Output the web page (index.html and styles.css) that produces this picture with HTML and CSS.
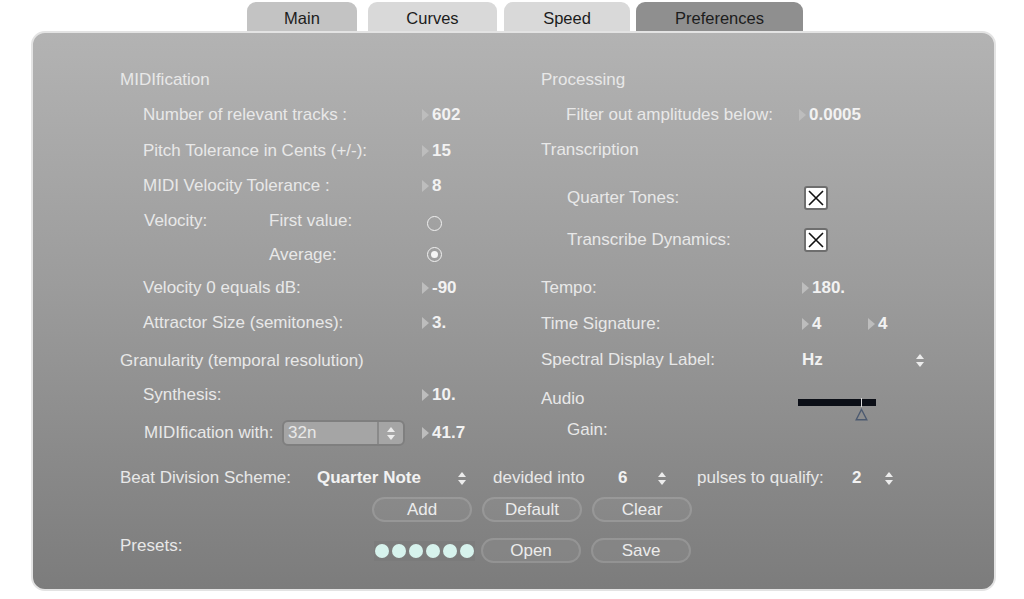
FILE: index.html
```html
<!DOCTYPE html>
<html>
<head>
<meta charset="utf-8">
<link rel="stylesheet" href="styles.css">
</head>
<body>
<div class="tabs">
  <div class="tab tab-main">Main</div>
  <div class="tab tab-light tab-curves">Curves</div>
  <div class="tab tab-light tab-speed">Speed</div>
  <div class="tab tab-active tab-prefs">Preferences</div>
</div>
<div class="panel">
  <div class="cols">
    <div class="col-left">
      <div class="row h35 head">MIDIfication</div>
      <div class="row h36"><span class="lbl-l">Number of relevant tracks :</span><span class="val"><i class="tri"></i>602</span></div>
      <div class="row h35"><span class="lbl-l">Pitch Tolerance in Cents (+/-):</span><span class="val"><i class="tri"></i>15</span></div>
      <div class="row h35"><span class="lbl-l">MIDI Velocity Tolerance :</span><span class="val"><i class="tri"></i>8</span></div>
      <div class="row h35"><span class="lbl-v">Velocity:</span><span class="lbl-sub">First value:</span><span class="radio"></span></div>
      <div class="row h33"><span class="lbl-v"></span><span class="lbl-sub">Average:</span><span class="radio on"></span></div>
      <div class="row h34"><span class="lbl-l">Velocity 0 equals dB:</span><span class="val"><i class="tri"></i>-90</span></div>
      <div class="row h35"><span class="lbl-l">Attractor Size (semitones):</span><span class="val"><i class="tri"></i>3.</span></div>
      <div class="row h38 pt3 head">Granularity (temporal resolution)</div>
      <div class="row h34"><span class="lbl-l">Synthesis:</span><span class="val"><i class="tri"></i>10.</span></div>
      <div class="row h42"><span class="lbl-w">MIDIfication with:</span>
        <span class="select"><span class="select-text">32n</span><span class="select-arrows"><i class="up"></i><i class="down"></i></span></span>
        <span class="val val-after"><i class="tri"></i>41.7</span></div>
    </div>
    <div class="col-right">
      <div class="row h35 head">Processing</div>
      <div class="row h35"><span class="lbl-r">Filter out amplitudes below:</span><span class="val"><i class="tri"></i>0.0005</span></div>
      <div class="row h36 head">Transcription</div>
      <div class="row h40 mt10"><span class="lbl-r2">Quarter Tones:</span><span class="check"><svg width="18" height="18" viewBox="0 0 18 18"><path d="M2 2L16 16M16 2L2 16" stroke="#111" stroke-width="1.6"/></svg></span></div>
      <div class="row h40 mt2"><span class="lbl-r2">Transcribe Dynamics:</span><span class="check"><svg width="18" height="18" viewBox="0 0 18 18"><path d="M2 2L16 16M16 2L2 16" stroke="#111" stroke-width="1.6"/></svg></span></div>
      <div class="row h36 mt10"><span class="lbl-h">Tempo:</span><span class="val"><i class="tri"></i>180.</span></div>
      <div class="row h36"><span class="lbl-h">Time Signature:</span><span class="val ts"><i class="tri"></i>4</span><span class="val"><i class="tri"></i>4</span></div>
      <div class="row h36"><span class="lbl-h">Spectral Display Label:</span><span class="bold hz">Hz</span><span class="arrows"><i class="up"></i><i class="down"></i></span></div>
      <div class="row h42"><span class="lbl-h">Audio</span>
        <span class="slider"><span class="bar"><span class="knob"></span></span><svg class="thumb" width="13" height="13" viewBox="0 0 13 13"><path d="M6.5 1.5L11.8 11.8H1.2Z" fill="none" stroke="#4c5a70" stroke-width="1.4"/></svg></span>
      </div>
      <div class="row h20"><span class="lbl-r2">Gain:</span></div>
    </div>
  </div>
  <div class="beat">
    <span class="b-lbl">Beat Division Scheme:</span>
    <span class="bold b-val">Quarter Note</span>
    <span class="arrows b-arr1"><i class="up"></i><i class="down"></i></span>
    <span class="b-dev">devided into</span>
    <span class="bold b-six">6</span>
    <span class="arrows b-arr2"><i class="up"></i><i class="down"></i></span>
    <span class="b-pul">pulses to qualify:</span>
    <span class="bold b-two">2</span>
    <span class="arrows"><i class="up"></i><i class="down"></i></span>
  </div>
  <div class="btnrow btnrow1">
    <span class="btn">Add</span>
    <span class="btn">Default</span>
    <span class="btn">Clear</span>
  </div>
  <div class="btnrow btnrow2">
    <span class="presets">Presets:</span>
    <span class="dots"><i></i><i></i><i></i><i></i><i></i><i></i></span>
    <span class="btn">Open</span>
    <span class="btn">Save</span>
  </div>
</div>
</body>
</html>
```
FILE: styles.css
```css
* { box-sizing: border-box; }
html, body { margin: 0; padding: 0; background: #ffffff; }
body {
  font-family: "Liberation Sans", Arial, sans-serif;
  font-size: 17px;
  width: 1024px;
  height: 599px;
  overflow: hidden;
}
.tabs {
  display: flex;
  height: 31px;
  padding-top: 2px;
  padding-left: 247px;
}
.tab {
  height: 29px;
  border-radius: 9px 9px 0 0;
  background: #c3c3c3;
  color: #1c1c1c;
  font-size: 16.5px;
  display: flex;
  align-items: center;
  justify-content: center;
  padding-top: 3px;
}
.tab-light { background: #d9d9d9; }
.tab-active { background: #8f8f8f; }
.tab-main { width: 110px; margin-right: 11px; }
.tab-curves { width: 129px; margin-right: 7px; }
.tab-speed { width: 126px; margin-right: 6px; }
.tab-prefs { width: 167px; }

.panel {
  margin-left: 31px;
  width: 965px;
  height: 560px;
  border: 2px solid #e3e3e3;
  border-radius: 14px;
  background: linear-gradient(180deg, #b3b3b3 0%, #9c9c9c 45%, #7c7c7c 100%);
  padding: 29px 0 0 87px;
  color: #e8e8e8;
}
.cols {
  display: grid;
  grid-template-columns: 421px 1fr;
}
.row {
  display: flex;
  align-items: center;
  white-space: nowrap;
}
.h20 { height: 20px; }
.h33 { height: 33px; }
.h34 { height: 34px; }
.h35 { height: 35px; }
.h36 { height: 36px; }
.h38 { height: 38px; }
.h40 { height: 40px; }
.h42 { height: 42px; }
.pt3 { padding-top: 3px; }
.mt10 { margin-top: 10px; }
.mt2 { margin-top: 2px; }

.lbl-l { margin-left: 23px; width: 279px; }
.lbl-v { margin-left: 24px; width: 125px; }
.lbl-sub { width: 161px; }
.lbl-w { margin-left: 24px; width: 138px; }
.lbl-r { margin-left: 25px; width: 233px; }
.lbl-r2 { margin-left: 26px; width: 237px; }
.lbl-h { width: 261px; }

.val {
  display: inline-flex;
  align-items: center;
  font-weight: bold;
  color: #f2f2f2;
}
.tri {
  display: inline-block;
  width: 0; height: 0;
  border-left: 7px solid #bdbdbd;
  border-top: 6px solid transparent;
  border-bottom: 6px solid transparent;
  margin-right: 3px;
}
.val-after { margin-left: 17px; }
.ts { width: 66px; }
.bold { font-weight: bold; color: #f2f2f2; }
.hz { width: 114px; }

.radio {
  width: 15px; height: 15px;
  border: 1.5px solid #f0f0f0;
  border-radius: 50%;
  margin-left: -3px;
  margin-top: 6px;
  display: flex;
  align-items: center;
  justify-content: center;
}
.radio.on { margin-top: 0; }
.radio.on::after {
  content: "";
  width: 7px; height: 7px;
  border-radius: 50%;
  background: #f4f4f4;
}

.select {
  width: 123px;
  height: 26px;
  border: 2px solid #7f7f7f;
  border-radius: 6px;
  background: #a5a5a5;
  display: flex;
  align-items: center;
}
.select-text { flex: 1; padding-left: 4px; }
.select-arrows {
  width: 26px;
  height: 100%;
  border-left: 2px solid #8a8a8a;
  display: flex;
  flex-direction: column;
  align-items: center;
  justify-content: center;
  gap: 3px;
}
.arrows {
  display: inline-flex;
  flex-direction: column;
  align-items: center;
  gap: 3px;
  width: 8px;
}
.up, .down {
  display: block;
  width: 0; height: 0;
  border-left: 4px solid transparent;
  border-right: 4px solid transparent;
}
.up { border-bottom: 5px solid #ececec; }
.down { border-top: 5px solid #ececec; }

.check {
  width: 24px; height: 24px;
  background: #ffffff;
  border: 2px solid #6e6e6e;
  border-radius: 3px;
  display: flex;
  align-items: center;
  justify-content: center;
}
.check svg { display: block; }

.slider {
  position: relative;
  margin-left: -4px;
  width: 80px;
  height: 28px;
  display: block;
  margin-top: 16px;
}
.bar {
  position: absolute;
  left: 0; top: 6px;
  width: 78px; height: 7px;
  background: #0c0f17;
}
.knob {
  position: absolute;
  left: 63px; top: -1px;
  width: 1px; height: 9px;
  background: #d8d8d8;
}
.thumb {
  position: absolute;
  left: 57px; top: 15px;
}

.beat {
  display: flex;
  align-items: center;
  height: 26px;
  margin-top: 11px;
  white-space: nowrap;
}
.b-lbl { width: 197px; }
.b-val { width: 141px; }
.b-arr1 { width: 8px; margin-right: 27px; }
.b-dev { width: 125px; }
.b-six { width: 40px; }
.b-arr2 { margin-right: 31px; }
.b-pul { width: 155px; }
.b-two { width: 33px; }

.btnrow {
  display: flex;
  align-items: center;
  gap: 10px;
}
.btnrow1 { margin-top: 6px; padding-left: 252px; }
.btnrow2 { margin-top: 16px; }
.btn {
  width: 100px;
  height: 25px;
  border: 2px solid rgba(255, 255, 255, 0.13);
  background: rgba(255, 255, 255, 0.04);
  border-radius: 13px;
  display: flex;
  align-items: center;
  justify-content: center;
  color: #ececec;
}
.presets { width: 245px; margin-top: -10px; }
.dots {
  display: flex;
  gap: 3px;
  padding: 3px 1px;
  background: rgba(0, 0, 0, 0.03);
  margin-left: -1px;
  margin-right: -4px;
}
.dots i {
  display: block;
  width: 14px; height: 14px;
  border-radius: 50%;
  background: #d7f3ed;
}
```
